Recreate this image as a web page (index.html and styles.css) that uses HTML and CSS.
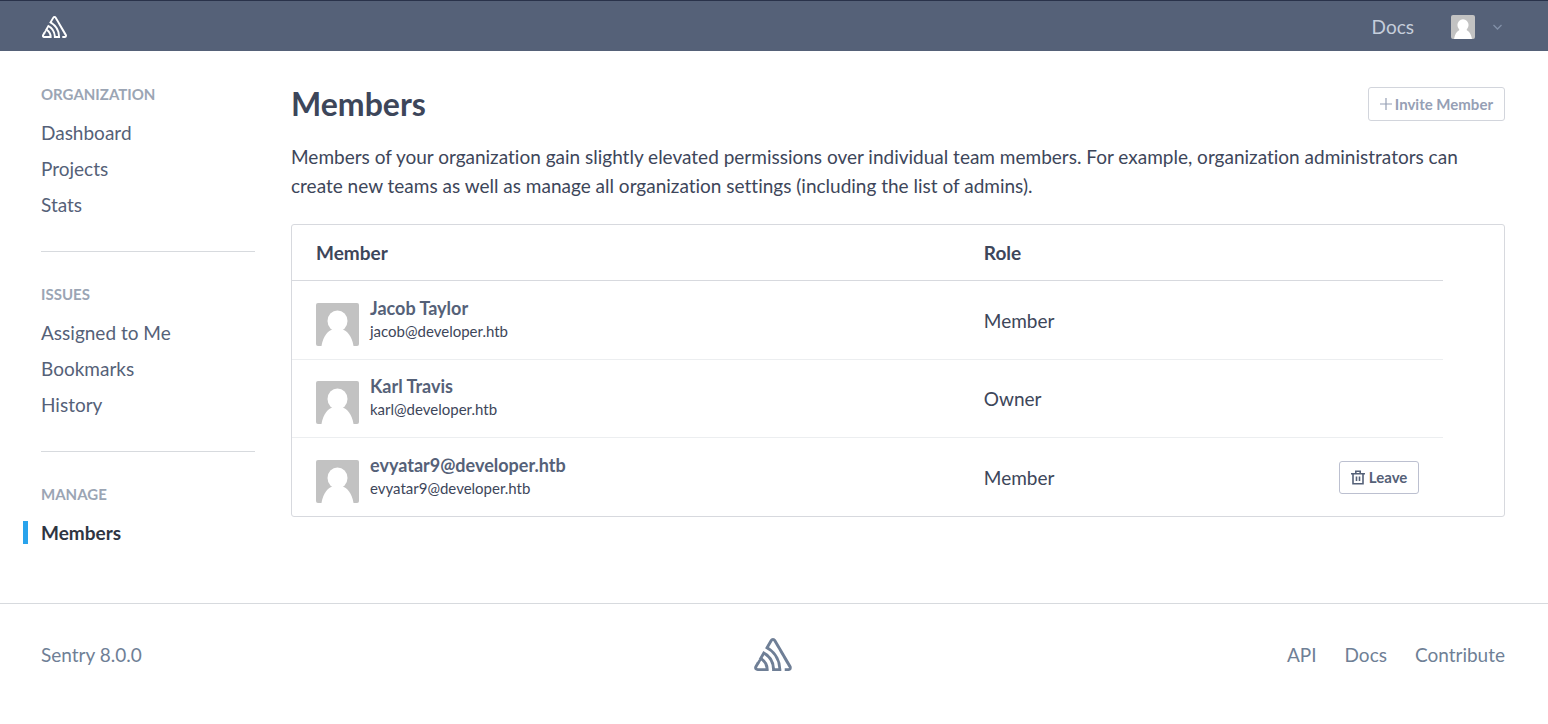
FILE: index.html
```html
<!DOCTYPE html>
<html lang="en">
<head>
<meta charset="utf-8">
<title>Members</title>
<link rel="stylesheet" href="styles.css">
</head>
<body>
<svg class="defs" aria-hidden="true">
  <symbol id="logo" viewBox="0 0 50 44"><path fill="currentColor" d="M29,2.26a4.67,4.67,0,0,0-8,0L14.42,13.53A32.21,32.21,0,0,1,32.17,40.19H27.55A27.68,27.68,0,0,0,12.09,17.47L6,28a15.92,15.92,0,0,1,9.23,12.17H4.62A.76.76,0,0,1,4,39.06l2.94-5a10.74,10.74,0,0,0-3.36-1.9l-2.91,5a4.54,4.54,0,0,0,1.69,6.24A4.66,4.66,0,0,0,4.62,44H19.15a19.4,19.4,0,0,0-8-17.31l2.31-4A23.87,23.87,0,0,1,23.76,44H36.07a35.88,35.88,0,0,0-16.41-31.8l4.67-8a.77.77,0,0,1,1.05-.27c.53.29,20.29,34.77,20.66,35.17a.76.76,0,0,1-.68,1.13H40.6q.09,1.91,0,3.81h4.78A4.59,4.59,0,0,0,50,39.43a4.49,4.49,0,0,0-.62-2.28Z"/><path d="M4.800 34l3.200-5.200" stroke="currentColor" stroke-width="3.500"/></symbol>
  <symbol id="person" viewBox="0 0 43 43"><path fill="#c2c2c2" d="M0 0h43v43H0z"/><ellipse cx="21.500" cy="18" rx="10" ry="10.500" fill="#fff"/><path fill="#fff" d="M5.500 43C7 33 12 28 17 26h9c5 2 10 7 11.500 17z"/></symbol>
</svg>
<header class="topbar">
  <a href="#" class="brand" aria-label="Sentry"><svg class="logo-small"><use href="#logo"/></svg></a>
  <nav class="topnav">
    <a href="#">Docs</a>
    <button type="button" class="account" aria-label="Account">
      <svg class="avatar-small"><use href="#person"/></svg>
      <svg class="chevron" viewBox="0 0 10 6"><path d="M1 1l4 4 4-4" fill="none" stroke="currentColor" stroke-width="1.300"/></svg>
    </button>
  </nav>
</header>
<div class="layout">
  <aside class="sidebar">
    <section class="group">
      <h2>ORGANIZATION</h2>
      <ul><li><a href="#">Dashboard</a></li><li><a href="#">Projects</a></li><li><a href="#">Stats</a></li></ul>
    </section>
    <section class="group">
      <h2>ISSUES</h2>
      <ul><li><a href="#">Assigned to Me</a></li><li><a href="#">Bookmarks</a></li><li><a href="#">History</a></li></ul>
    </section>
    <section class="group">
      <h2>MANAGE</h2>
      <ul><li class="active"><a href="#">Members</a></li></ul>
    </section>
  </aside>
  <main class="content">
    <div class="heading">
      <h1>Members</h1>
      <button type="button" class="btn muted"><svg class="plus" viewBox="0 0 12 12"><path d="M6 0v12M0 6h12" stroke="currentColor" stroke-width="1.200"/></svg>Invite Member</button>
    </div>
    <p class="intro">Members of your organization gain slightly elevated permissions over individual team members. For example, organization administrators can create new teams as well as manage all organization settings (including the list of admins).</p>
    <div class="panel">
      <table>
        <thead><tr><th scope="col" class="col-member">Member</th><th scope="col">Role</th><th class="col-action"></th></tr></thead>
        <tbody>
          <tr>
            <td><div class="member"><svg class="avatar"><use href="#person"/></svg><div><a href="#" class="name">Jacob Taylor</a><div class="email">jacob@developer.htb</div></div></div></td>
            <td>Member</td><td class="action"></td>
          </tr>
          <tr>
            <td><div class="member"><svg class="avatar"><use href="#person"/></svg><div><a href="#" class="name">Karl Travis</a><div class="email">karl@developer.htb</div></div></div></td>
            <td>Owner</td><td class="action"></td>
          </tr>
          <tr>
            <td><div class="member"><svg class="avatar"><use href="#person"/></svg><div><a href="#" class="name">evyatar9@developer.htb</a><div class="email">evyatar9@developer.htb</div></div></div></td>
            <td>Member</td>
            <td class="action"><button type="button" class="btn"><svg class="trash" viewBox="0 0 14 15"><path d="M0 3.800h14M4.800 3.500V1.200h4.400v2.300M2 4v9.800h10V4M5.500 6.500v4.500M8.500 6.500v4.500" fill="none" stroke="currentColor" stroke-width="1.600"/></svg>Leave</button></td>
          </tr>
        </tbody>
      </table>
    </div>
  </main>
</div>
<footer class="footer">
  <div>Sentry 8.0.0</div>
  <a href="#" class="mark" aria-label="Sentry"><svg class="logo-large"><use href="#logo"/></svg></a>
  <nav class="links"><a href="#">API</a><a href="#">Docs</a><a href="#">Contribute</a></nav>
</footer>
</body>
</html>
```
FILE: styles.css
```css
* { box-sizing: border-box; }
body { margin: 0; background: #fff; color: #3d465a; font-family: Lato, sans-serif; font-size: 19px; line-height: 29px; font-variant-ligatures: none; }
a { color: inherit; text-decoration: none; }
svg { display: block; flex: none; }
h1, h2, p, ul { margin: 0; padding: 0; }
ul { list-style: none; }
button { font-family: inherit; cursor: pointer; }
.defs { position: absolute; width: 0; height: 0; }

.topbar { display: flex; align-items: center; justify-content: space-between; height: 51px; padding: 1px 45px 0 42px; background: #556178; border-top: 1px solid #29324a; }
.brand { color: #fff; }
.logo-small { width: 25px; height: 22px; }
.topnav { display: flex; align-items: center; gap: 37px; color: #c5cedb; }
.account { display: flex; align-items: center; gap: 17px; padding: 0; border: 0; background: none; color: #8290a8; }
.avatar-small { width: 24px; height: 24px; border-radius: 2px; }
.chevron { width: 11px; height: 6px; }

.layout { display: grid; grid-template-columns: 214px minmax(0, 1fr); gap: 36px; padding: 32px 43px 52px 41px; }
.group + .group { margin-top: 28px; padding-top: 31px; border-top: 1px solid #d7dade; }
.group h2 { margin-bottom: 9px; color: #9ba5b4; font-size: 15px; line-height: 23px; font-weight: 700; }
.group li { height: 36px; line-height: 36px; color: #556178; }
.group li.active { position: relative; color: #2f3542; font-weight: 700; }
.active::before { content: ""; position: absolute; left: -18px; top: 6px; width: 5px; height: 23px; background: #29a3ec; }

.heading { display: flex; align-items: center; justify-content: space-between; padding-top: 4px; }
.heading h1 { font-size: 32px; line-height: 34px; font-weight: 700; }
.btn { display: flex; align-items: center; gap: 4px; height: 33px; padding: 0 11px; border: 1px solid #bcc0d0; border-radius: 3px; background: #fff; color: #556178; font-size: 15px; line-height: 20px; font-weight: 700; }
.btn.muted { gap: 3px; height: 34px; border-color: #d2d5dc; color: #96a0b5; }
.plus { width: 12px; height: 12px; }
.trash { width: 14px; height: 15px; }
.intro { margin-top: 21px; }

.panel { margin-top: 24px; border: 1px solid #d7d9de; border-radius: 3px; }
table { width: 95%; border-collapse: separate; border-spacing: 0; table-layout: fixed; }
th, td { padding: 0 24px; text-align: left; }
th { height: 56px; border-bottom: 1px solid #d7d9de; font-weight: 700; }
.col-member { width: 58%; }
.col-action { width: 18%; }
td { height: 78px; border-bottom: 1px solid #eceef0; }
tr:first-child td { height: 79px; }
tr:last-child td { border-bottom: 0; }
.member { display: flex; gap: 11px; }
.avatar { width: 43px; height: 43px; margin-top: 8px; border-radius: 2px; }
.name { display: block; color: #556178; font-size: 18px; line-height: 26px; font-weight: 700; }
.email { font-size: 15px; line-height: 20px; }
.action .btn { margin-left: auto; }

.footer { display: grid; grid-template-columns: 1fr auto 1fr; align-items: center; padding: 34px 43px 48px 41px; border-top: 1px solid #d7dade; color: #6f7f96; }
.logo-large { width: 38px; height: 33px; }
.links { display: flex; justify-content: flex-end; gap: 28px; }
```
